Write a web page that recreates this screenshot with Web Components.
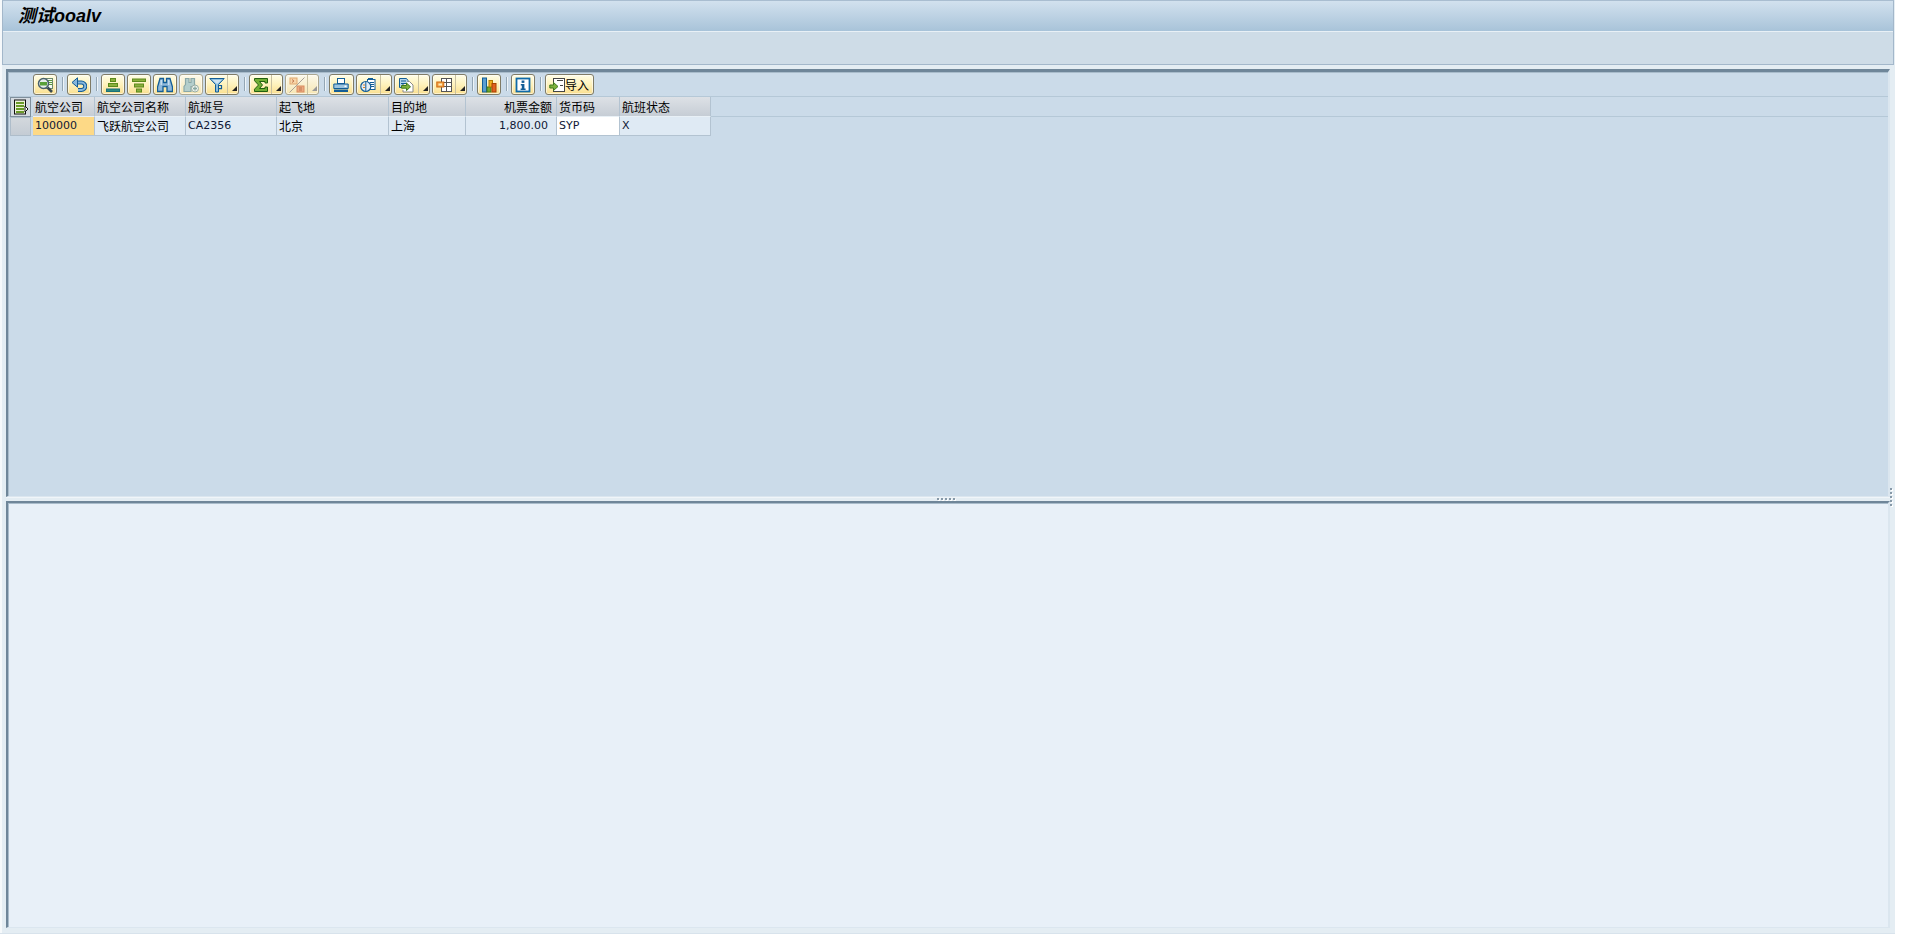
<!DOCTYPE html>
<html lang="zh"><head><meta charset="utf-8"><title>测试ooalv</title>
<style>
html,body{margin:0;padding:0;background:#fff;height:100%;overflow:hidden}
body{font-family:"DejaVu Sans","Noto Sans CJK SC",sans-serif}
</style></head><body>
<sap-window>
  <sap-titlebar slot="head">测试ooalv</sap-titlebar>
  <sap-split>
    <sap-pane slot="top" tone="top">
      <sap-toolbar>
        <sap-btn icon="detail"></sap-btn><sap-sep></sap-sep>
        <sap-btn icon="undo"></sap-btn><sap-sep></sap-sep>
        <sap-btn icon="asc"></sap-btn><sap-btn icon="desc"></sap-btn><sap-btn icon="find"></sap-btn><sap-btn icon="findnext" off></sap-btn><sap-btn icon="filter" menu></sap-btn><sap-sep></sap-sep>
        <sap-btn icon="sum" menu></sap-btn><sap-btn icon="subtotal" menu off></sap-btn><sap-sep></sap-sep>
        <sap-btn icon="print" w="25"></sap-btn><sap-btn icon="views" menu w="36"></sap-btn><sap-btn icon="export" menu w="36"></sap-btn><sap-btn icon="layout" menu w="35"></sap-btn><sap-sep></sap-sep>
        <sap-btn icon="chart"></sap-btn><sap-sep></sap-sep>
        <sap-btn icon="info"></sap-btn><sap-sep></sap-sep>
        <sap-btn icon="import" w="49">导入</sap-btn>
      </sap-toolbar>
      <sap-grid></sap-grid>
    </sap-pane>
    <sap-pane slot="bottom" tone="bottom"></sap-pane>
  </sap-split>
</sap-window>
<script>
const ICONS={
detail:`<rect x="7.5" y="1.5" width="8" height="10" fill="#f4f8f4" stroke="#6d8a6d"/><path d="M11 3.5h4M11 5.5h4M11 7.5h4" stroke="#5a9a3a"/><circle cx="6.5" cy="6.5" r="5" fill="#e6eeea" stroke="#48606c" stroke-width="1.5"/><rect x="3" y="5" width="7" height="3.5" fill="#58a038"/><path d="M10.5 10.5l4.5 4.5" stroke="#3a4a50" stroke-width="2.6"/>`,
undo:`<path d="M5 5.5h5.5a3.7 3.7 0 0 1 0 7.5H7" fill="none" stroke="#135d96" stroke-width="4"/><path d="M5 5.5h5.5a3.7 3.7 0 0 1 0 7.5H7" fill="none" stroke="#86b6dc" stroke-width="2"/><path d="M6.5 .8L1 5.5l5.5 4.7z" fill="#86b6dc" stroke="#135d96"/>`,
asc:`<rect x="5.5" y="1.5" width="5" height="3" fill="#8ab03c" stroke="#5c8a1c"/><rect x="3.5" y="6.5" width="9" height="3" fill="#8ab03c" stroke="#5c8a1c"/><rect x="1.5" y="12" width="13" height="2.5" fill="#2c8a80" stroke="#1b6f78"/>`,
desc:`<rect x="1.5" y="2" width="13" height="2.5" fill="#8ab03c" stroke="#5c8a1c"/><rect x="3.5" y="7" width="9" height="3" fill="#8ab03c" stroke="#5c8a1c"/><rect x="5.5" y="12" width="5" height="3" fill="#8ab03c" stroke="#5c8a1c"/>`,
find:`<path d="M3 1.5h3.5v4h3v-4H13l2.5 8.5v4.5h-5.5V9.5H6v5H.5V10z" fill="#8fb8da" stroke="#135d96" stroke-width="1.3"/><path d="M4.2 3v5M11.8 3v5" stroke="#e0eef8"/>`,
findnext:`<path d="M2.5 1.5h3.5v4h2v-4h3.5v6l1 2H8v5H1v-5l1.5-2z" fill="#b4cecc" stroke="#8aa8a8" stroke-width="1.2"/><circle cx="12" cy="11.5" r="3.5" fill="#eef2ee" stroke="#98aea4"/><path d="M10 11.5h4M12 9.5v4" stroke="#88a8a0" stroke-width="1.3"/>`,
filter:`<path d="M.8 1.5h14.4L9.5 7.5v7.5h-3V7.5z" fill="#8cc0e0" stroke="#135d96"/><path d="M3.5 3h9L8.8 6.5H7.2z" fill="#cfe4f2"/><path d="M9.5 8.5h3v3.2h-3" fill="none" stroke="#135d96" stroke-width="1.2"/>`,
sum:`<path d="M1.5 1.5h13v4.5H12V4.5H6.5L9.5 8l-3 3.5H12V10h2.5v4.5h-13v-2.3L5.5 8l-4-4.3z" fill="#6fae35" stroke="#22600f"/>`,
subtotal:`<rect x="1" y="1" width="7" height="6" fill="#f8d4a8" stroke="#e0a870"/><rect x="8" y="9" width="7" height="6" fill="#eca880" stroke="#d88c60"/><path d="M3 2.5l2 1.5-2 1.5M10 11h3M10 13h3" fill="none" stroke="#c07a50"/><path d="M.5 15.5L15.5.5" stroke="#a8a098"/>`,
print:`<rect x="4.5" y="1.5" width="7" height="5" fill="#fff" stroke="#135d96"/><path d="M.8 7h14.4v4.5H.8z" fill="#9cc4e0" stroke="#135d96"/><rect x="11.5" y="8.5" width="2" height="1.5" fill="#fff"/><rect x="1" y="12.5" width="14" height="2.5" fill="#135d96"/>`,
views:`<rect x="8" y="1" width="5" height="3" fill="#135d96"/><rect x="7.5" y="2.5" width="7.5" height="10" fill="#fff" stroke="#135d96"/><path d="M10 5.5h4M10 7.5h4M10 9.5h4" stroke="#135d96"/><circle cx="5.8" cy="9.5" r="5" fill="#e2edf5" stroke="#135d96" stroke-width="1.2"/><path d="M5.8 5v9" stroke="#135d96"/><path d="M3 8h2M3 10.5h2" stroke="#e08020"/>`,
export:`<path d="M1.5 1.5h7l1.5 2v3H5v4H1.5z" fill="#b6d6ec" stroke="#135d96"/><path d="M3 4h5M3 6.5h2" stroke="#135d96"/><path d="M9.5 4.5h2l3.5 3.5v7H5v-2" fill="#fff" stroke="#8a8a8a"/><path d="M3.5 8.5h5V6l4 3.8-4 3.8v-2.4h-5z" fill="#7db13c" stroke="#3f7a1c"/>`,
layout:`<rect x="5.5" y="1.5" width="10" height="13" fill="#fff" stroke="#555"/><path d="M5.5 5.5h10M5.5 9.5h10M10.5 1.5v13" stroke="#555"/><rect x=".8" y="5" width="7" height="5" fill="#f0a040" stroke="#d06a10"/><rect x="2.5" y="6.5" width="3.5" height="2" fill="#ffe8b8"/>`,
chart:`<rect x="1.5" y="1" width="4" height="14" fill="#5a9ed0" stroke="#135d96"/><rect x="6" y="10" width="4" height="5" fill="#70a82c" stroke="#3f7a1c"/><rect x="8" y="3.5" width="3.5" height="6.5" fill="#f0b020" stroke="#b07a00"/><rect x="11" y="6.5" width="4" height="8.5" fill="#e06020" stroke="#a84000"/>`,
info:`<rect x="1.5" y="1.5" width="13" height="13" fill="#fff" stroke="#0f6aa8" stroke-width="1.8"/><rect x="6.6" y="3.5" width="2.8" height="2.4" fill="#135d96"/><path d="M5.8 7h3.6v4.5h1.2V13H5.6v-1.5h1.2V8.4H5.8z" fill="#135d96"/>`,
import:`<rect x="4.5" y="1.5" width="11" height="13" fill="#fff" stroke="#444"/><path d="M8 3.5h6M11 8.5h3" stroke="#444"/><path d="M.8 8h3.7V5.5l4.5 4-4.5 4V11H.8z" fill="#7db13c" stroke="#3f7a1c"/>`
};
customElements.define('sap-window',class extends HTMLElement{constructor(){super();this.attachShadow({mode:'open'}).innerHTML=`<style>
:host{display:flex;flex-direction:column;width:1895px;height:934px;box-sizing:border-box;background:#e4edf3;
 border-bottom:1px solid #d8e3ec;box-shadow:inset 2px 0 0 #f6f9fb}
.h{flex:none;margin:0 1px 0 2px}
.b{flex:1;min-height:0;display:flex;padding:4px 5px 5px 6px}
</style><div class="h"><slot name="head"></slot></div><div class="b"><slot></slot></div>`}});
customElements.define('sap-titlebar',class extends HTMLElement{constructor(){super();this.attachShadow({mode:'open'}).innerHTML=`<style>
:host{display:block;height:65px;box-sizing:border-box;border:1px solid #a3b7ca;border-top-color:#a9bdd0;background:#cedce7}
.t{height:31px;box-sizing:border-box;border-bottom:1px solid #e8f0f6;padding:0 0 5px 15px;display:flex;align-items:center;
 background:linear-gradient(#d2e1ee,#a8c3d9);font:italic bold 18px "Liberation Sans","Noto Sans CJK SC",sans-serif;color:#000}
</style><div class="t"><slot></slot></div>`}});
customElements.define('sap-split',class extends HTMLElement{constructor(){super();this.attachShadow({mode:'open'}).innerHTML=`<style>
:host{display:grid;flex:1;grid-template-rows:428px 4px 1fr;min-width:0;position:relative}
.s{position:relative;background:#e4edf3;box-shadow:inset 0 1px 0 #f0f5f9}
.d{position:absolute;left:931px;top:1px;display:flex;gap:2px}
.d i{width:2px;height:2px;background:#8799a8;box-shadow:1px 1px 0 #fff}
.v{position:absolute;left:1884px;top:419px;display:flex;flex-direction:column;gap:2px}
.v i{width:2px;height:2px;background:#8799a8;box-shadow:1px 1px 0 #fff}
</style><slot name="top"></slot><div class="s"><div class="d"><i></i><i></i><i></i><i></i><i></i></div></div><slot name="bottom"></slot>
<div class="v"><i></i><i></i><i></i><i></i><i></i></div>`}});
customElements.define('sap-pane',class extends HTMLElement{constructor(){super();const b=this.getAttribute('tone')==='bottom';this.attachShadow({mode:'open'}).innerHTML=`<style>
:host{display:block;box-sizing:border-box;min-height:0;overflow:hidden;background:${b?'#e8f0f8':'#cbdbe9'};
 border-top:${b?2:3}px solid #6f8699;border-left:2px solid #6f8699;border-right:2px solid #dbe6ef;border-bottom:1px solid #dbe6ef;
 box-shadow:inset 1px 1px 0 #a9bccb}
</style><slot></slot>`}});
customElements.define('sap-toolbar',class extends HTMLElement{constructor(){super();this.attachShadow({mode:'open'}).innerHTML=`<style>
:host{display:flex;align-items:flex-start;height:25px;box-sizing:border-box;padding:2px 0 0 25px;border-bottom:1px solid #b5c8d7}
</style><slot></slot>`}});
customElements.define('sap-sep',class extends HTMLElement{constructor(){super();this.attachShadow({mode:'open'}).innerHTML=`<style>
:host{display:block;flex:none;width:1px;height:14px;margin:3px 4px 0 3px;background:#93a6b5;box-shadow:1px 0 0 #eef4f8}
</style>`}});
customElements.define('sap-btn',class extends HTMLElement{constructor(){super();
 const menu=this.hasAttribute('menu'),off=this.hasAttribute('off'),ic=this.getAttribute('icon');
 const w=this.getAttribute('w')||(menu?34:24);
 this.attachShadow({mode:'open'}).innerHTML=`<style>
:host{display:flex;flex:none;width:${w}px;height:21px;box-sizing:border-box;margin-right:2px;border:1px solid #7f7b66;border-radius:3px;
 background:linear-gradient(#fffde6 0,#fef2bc 50%,#fadf90 100%);box-shadow:inset 0 0 0 1px rgba(255,255,255,.55);
 font:12px "Noto Sans CJK SC",sans-serif;color:#000;align-items:center;overflow:hidden;${off?'border-color:#aaa690;background:linear-gradient(#fcf9ea,#f6e6b4);':''}}
.i{flex:none;width:22px;height:19px;display:flex;align-items:center;justify-content:center}
svg{display:block;width:16px;height:16px}
.l{flex:1;white-space:nowrap;line-height:19px;margin-left:-3px}
.m{margin-left:auto;flex:none;width:10px;height:19px;border-left:1px solid #c8c0a0;position:relative}
.m:after{content:"";position:absolute;right:1px;bottom:3px;border-style:solid;border-width:0 0 5px 5px;border-color:transparent transparent ${off?'#999':'#222'} transparent}
</style><span class="i"><svg viewBox="0 0 16 16">${ICONS[ic]}</svg></span><span class="l"><slot></slot></span>${menu?'<span class="m"></span>':''}`;}});
customElements.define('sap-grid',class extends HTMLElement{constructor(){super();
 const cols=[{h:'航空公司',d:'100000',bg:'#fdd986'},{h:'航空公司名称',d:'飞跃航空公司',z:1},{h:'航班号',d:'CA2356'},{h:'起飞地',d:'北京',z:1},{h:'目的地',d:'上海',z:1},{h:'机票金额',d:'1,800.00',r:1},{h:'货币码',d:'SYP',bg:'#fff'},{h:'航班状态',d:'X'}];
 const hs=cols.map(c=>`<div class="c hd${c.r?' r':''}">${c.h}</div>`).join('');
 const ds=cols.map(c=>`<div class="c dt${c.r?' r am':''}${c.z?' z':''}"${c.bg?` style="background:${c.bg}"`:''}>${c.d}</div>`).join('');
 this.attachShadow({mode:'open'}).innerHTML=`<style>
:host{display:block;position:relative;padding:0 0 0 2px}
:host:before{content:"";position:absolute;left:0;right:0;top:19px;height:1px;background:#b5c8d7}
.g{position:relative;display:grid;grid-template-columns:23px 62px 91px 91px 112px 77px 91px 63px 91px;grid-template-rows:20px 19px;width:max-content}
.c{box-sizing:border-box;font-size:12px;line-height:18px;padding:0 2px;white-space:nowrap;overflow:hidden;border-right:1px solid #b3c3d1;color:#000;font-family:"Noto Sans CJK SC",sans-serif}
.hd{background:linear-gradient(#dde1e6,#c6cdd5);border-bottom:1px solid #e8f0f6;line-height:19px}
.dt{background:#dfeaf4;border-bottom:1px solid #b3c3d1;font-family:"DejaVu Sans","Noto Sans CJK SC",sans-serif;font-size:11px;color:#0f1836;padding-left:2px}
.z{font-family:"Noto Sans CJK SC",sans-serif;font-size:12px;color:#000}
.r{text-align:right;padding-right:4px}.am{padding-right:8px}
.corner{padding:0;border:1px solid #7f8f9c;background:#d5dbe1;display:flex;align-items:center;justify-content:center;margin-right:2px}
.rh{padding:0;background:linear-gradient(#d3d8dd,#c4ccd4);border:1px solid #aebdca;margin-right:2px}
svg{width:16px;height:16px;display:block}
</style><div class="g"><div class="c corner"><svg viewBox="0 0 16 16"><rect x="1.5" y="1" width="11" height="14" fill="#eef2d8" stroke="#111"/><path d="M3 4h8M3 7h8M3 10h8M3 13h8" stroke="#6a9a28" stroke-width="2"/><path d="M12 7l3 3-3 3z" fill="#fff" stroke="#111"/></svg></div>${hs}<div class="c rh"></div>${ds}</div>`;}});
</script>
</body></html>
